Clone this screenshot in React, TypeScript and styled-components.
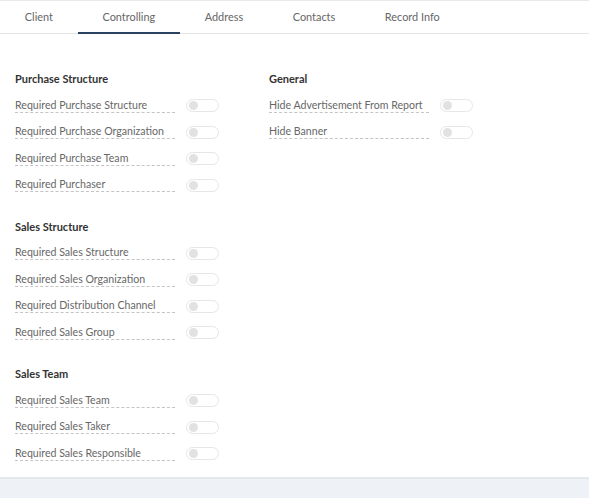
import styled, { createGlobalStyle } from "styled-components";

const GlobalStyle = createGlobalStyle`
  html, body {
    margin: 0;
    padding: 0;
    background: #ffffff;
  }
  body {
    font-family: "Lato", "Liberation Sans", sans-serif;
  }
  * { box-sizing: border-box; }
`;

interface Section {
  title: string;
  items: string[];
}

const leftSections: Section[] = [
  {
    title: "Purchase Structure",
    items: [
      "Required Purchase Structure",
      "Required Purchase Organization",
      "Required Purchase Team",
      "Required Purchaser",
    ],
  },
  {
    title: "Sales Structure",
    items: [
      "Required Sales Structure",
      "Required Sales Organization",
      "Required Distribution Channel",
      "Required Sales Group",
    ],
  },
  {
    title: "Sales Team",
    items: ["Required Sales Team", "Required Sales Taker", "Required Sales Responsible"],
  },
];

const rightSections: Section[] = [
  {
    title: "General",
    items: ["Hide Advertisement From Report", "Hide Banner"],
  },
];

const tabs = ["Client", "Controlling", "Address", "Contacts", "Record Info"];

const Page = styled.div`
  display: flex;
  flex-direction: column;
  height: 100vh;
  border-top: 1px solid #e9e9e9;
`;

const TabBar = styled.div`
  display: flex;
  flex-shrink: 0;
  height: 33px;
  border-bottom: 1px solid #e4e4e4;
`;

const Tab = styled.div<{ $active?: boolean }>`
  padding: 0 24.8px;
  height: 33px;
  line-height: 31px;
  font-size: 10.9px;
  color: #666;
  border-bottom: 2px solid ${(p) => (p.$active ? "#2a4160" : "transparent")};
  margin-bottom: -1px;
  cursor: pointer;
`;

const Content = styled.div`
  flex: 1;
  min-height: 0;
  display: flex;
  padding: 32px 15px 0;
`;

const Column = styled.div<{ $width?: number }>`
  display: flex;
  flex-direction: column;
  width: ${(p) => (p.$width ? `${p.$width}px` : "auto")};
`;

const SectionBlock = styled.div`
  display: flex;
  flex-direction: column;
  margin-bottom: 15.5px;
  &:last-child { margin-bottom: 0; }
`;

const SectionTitle = styled.div`
  height: 26px;
  line-height: 26px;
  font-size: 11px;
  font-weight: 700;
  color: #333;
`;

const Row = styled.div`
  display: flex;
  align-items: center;
  height: 26.5px;
  gap: 11px;
`;

const Label = styled.div`
  width: 160px;
  font-size: 10.6px;
  line-height: 14px;
  color: #676767;
  border-bottom: 1px dashed #c4c4c4;
  white-space: nowrap;
`;

const Switch = styled.div`
  width: 33px;
  height: 13px;
  border: 1px solid #e6e6e6;
  border-radius: 7px;
  background: #fff;
  display: flex;
  align-items: center;
  padding-left: 2px;
  margin-top: 1px;
`;

const Knob = styled.div`
  width: 9px;
  height: 9px;
  border-radius: 50%;
  background: #e2e2e2;
`;

const Footer = styled.div`
  flex-shrink: 0;
  height: 21px;
  border-top: 2px solid #e5e8eb;
  background: #eef2f6;
`;

function SectionView({ section }: { section: Section }) {
  return (
    <SectionBlock>
      <SectionTitle>{section.title}</SectionTitle>
      {section.items.map((item) => (
        <Row key={item}>
          <Label>{item}</Label>
          <Switch>
            <Knob />
          </Switch>
        </Row>
      ))}
    </SectionBlock>
  );
}

export default function App() {
  return (
    <>
      <GlobalStyle />
      <Page>
        <TabBar>
          {tabs.map((t) => (
            <Tab key={t} $active={t === "Controlling"}>
              {t}
            </Tab>
          ))}
        </TabBar>
        <Content>
          <Column $width={254}>
            {leftSections.map((s) => (
              <SectionView key={s.title} section={s} />
            ))}
          </Column>
          <Column>
            {rightSections.map((s) => (
              <SectionView key={s.title} section={s} />
            ))}
          </Column>
        </Content>
        <Footer />
      </Page>
    </>
  );
}
